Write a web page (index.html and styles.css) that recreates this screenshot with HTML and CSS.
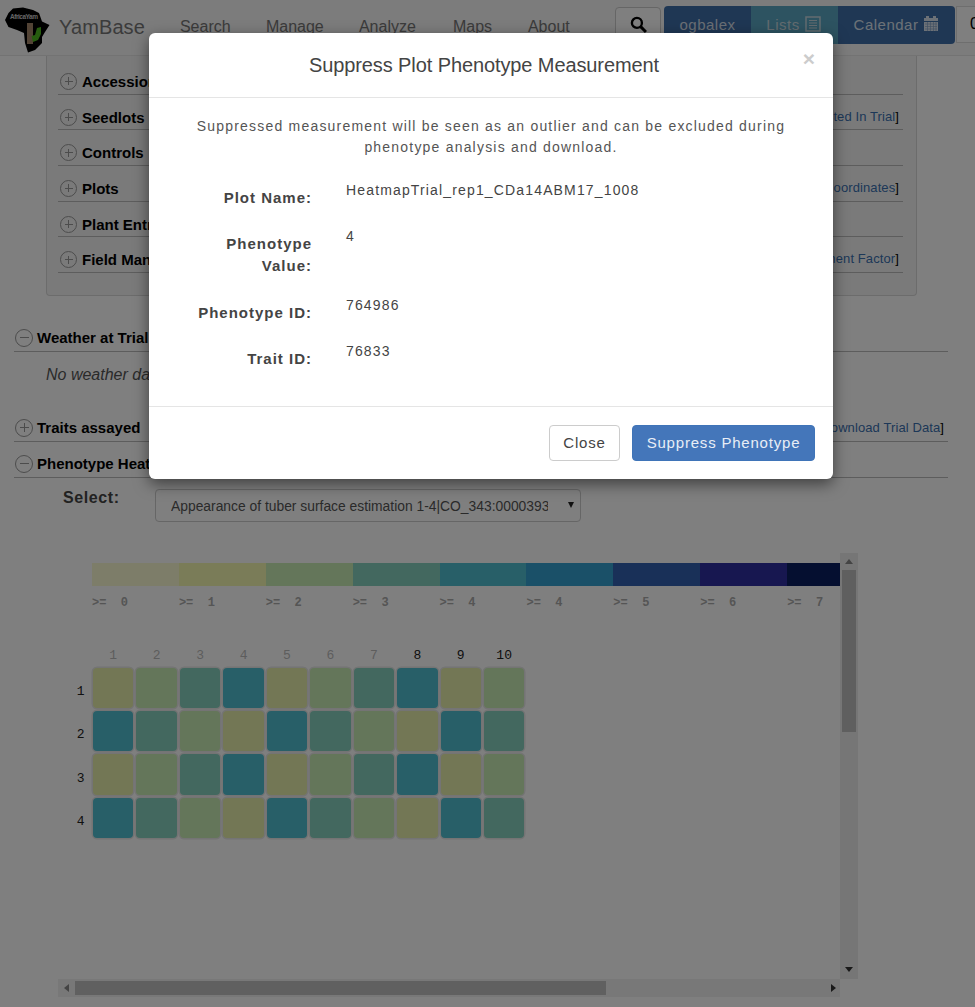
FILE: index.html
```
<!DOCTYPE html>
<html>

<head>
    <meta name="viewport" content="width=device-width, initial-scale=1">
    <title>YamBase</title>
    <link rel="stylesheet" href="styles.css">
</head>

<body>
    <div class="page">
        <!-- Top navigation -->
        <nav class="navbar">
            <svg class="logo" viewBox="0 0 46 46" width="46" height="46">
                <path d="M8 1.5 L18 0.5 L28 3 L34 6 L37 14.5 L44.5 18 L40 25 L37 30 L37 36 L30 43 L23 45.5 L20 36 L19 26 L12 23 L3.5 20 L0 13 L3.5 6 Z" fill="#000"/>
                <rect x="22" y="16" width="6" height="21" fill="#a5866a"/>
                <path d="M28 35 L26.5 29 L30 28 L32 21 L36 20 L36 27 L33 33 Z" fill="#4fb81f"/>
                <text x="5" y="12" class="logoText" textLength="28">AfricaYam</text>
            </svg>
            <span class="brand">YamBase</span>
            <ul class="navLinks">
                <li class="navSearch">Search</li>
                <li class="navManage">Manage</li>
                <li class="navAnalyze">Analyze</li>
                <li class="navMaps">Maps</li>
                <li class="navAbout">About</li>
            </ul>
            <div class="navRight">
                <button class="searchBtn">
                    <svg viewBox="0 0 16 16" width="17" height="17"><circle cx="6.5" cy="6.5" r="4.7" fill="none" stroke="#000" stroke-width="2.2"/><path d="M10 10 L15 15" stroke="#000" stroke-width="2.8"/></svg>
                </button>
                <div class="userBtns">
                    <span class="userBtn userName">ogbalex</span>
                    <span class="userBtn userLists">Lists
                        <svg viewBox="0 0 16 16" width="16" height="16"><rect x="1" y="1" width="14" height="14" fill="none" stroke="#c6d8e0" stroke-width="1.5"/><path d="M4 4.5H12M4 7H12M4 9.5H12M4 12H12" stroke="#c6d8e0"/></svg>
                    </span>
                    <span class="userBtn userCalendar">Calendar
                        <svg viewBox="0 0 16 16" width="16" height="16"><rect x="1" y="2" width="14" height="13" fill="#d8e2ee"/><rect x="3" y="0" width="3" height="4" fill="#d8e2ee"/><rect x="10" y="0" width="3" height="4" fill="#d8e2ee"/><path d="M1 5.5H15" stroke="#3a6ea8"/><path d="M2 8H14M2 10.5H14M2 13H14M4.5 6V15M7.5 6V15M10.5 6V15M13 6V15" stroke="#7a9cc4" stroke-width=".6"/></svg>
                    </span>
                </div>
                <span class="cartBtn">0</span>
            </div>
        </nav>

        <!-- Trial design panel -->
        <div class="well">
            <div class="wellRow"><span class="circleIcon plus"></span><b>Accessions</b></div>
            <div class="wellRow"><span class="circleIcon plus"></span><b>Seedlots</b><span class="rowLink">[<a>Seedlots Listed In Trial</a>]</span></div>
            <div class="wellRow"><span class="circleIcon plus"></span><b>Controls</b></div>
            <div class="wellRow"><span class="circleIcon plus"></span><b>Plots</b><span class="rowLink">[<a>Upload Plot Coordinates</a>]</span></div>
            <div class="wellRow"><span class="circleIcon plus"></span><b>Plant Entries</b></div>
            <div class="wellRow"><span class="circleIcon plus"></span><b>Field Management Factors</b><span class="rowLink">[<a>Add Management Factor</a>]</span></div>
        </div>

        <div class="section sectionWeather"><span class="circleIcon minus"></span><b>Weather at Trial Location</b></div>
        <p class="noWeather">No weather data available for this trial</p>

        <div class="section sectionTraits"><span class="circleIcon plus"></span><b>Traits assayed</b><span class="rowLink">[<a>Download Trial Data</a>]</span></div>
        <div class="section sectionHeat"><span class="circleIcon minus"></span><b>Phenotype Heatmap</b></div>

        <div class="selectRow">
            <label class="selectLabel">Select:</label>
            <div class="selectBox">
                <select>
                    <option>Appearance of tuber surface estimation 1-4|CO_343:0000393</option>
                </select>
            </div>
        </div>

        <!-- Heatmap with its scrollbars -->
        <div class="scroller">
            <div class="scrollView">
                <div class="heatArea">
                    <div class="legend">
                        <div class="legendItem"><span class="swatch l0"></span><span class="legendText">&gt;=  0</span></div>
                        <div class="legendItem"><span class="swatch l1"></span><span class="legendText">&gt;=  1</span></div>
                        <div class="legendItem"><span class="swatch l2"></span><span class="legendText">&gt;=  2</span></div>
                        <div class="legendItem"><span class="swatch l3"></span><span class="legendText">&gt;=  3</span></div>
                        <div class="legendItem"><span class="swatch l4"></span><span class="legendText">&gt;=  4</span></div>
                        <div class="legendItem"><span class="swatch l5"></span><span class="legendText">&gt;=  4</span></div>
                        <div class="legendItem"><span class="swatch l6"></span><span class="legendText">&gt;=  5</span></div>
                        <div class="legendItem"><span class="swatch l7"></span><span class="legendText">&gt;=  6</span></div>
                        <div class="legendItem"><span class="swatch l8"></span><span class="legendText">&gt;=  7</span></div>
                    </div>
                    <div class="heatGrid">
                        <span class="corner"></span>
                        <span class="colHead">1</span><span class="colHead">2</span><span class="colHead">3</span><span class="colHead">4</span><span class="colHead">5</span><span class="colHead">6</span><span class="colHead">7</span><span class="colHead dark">8</span><span class="colHead dark">9</span><span class="colHead dark">10</span>

                        <span class="rowHead">1</span>
                        <span class="cell l1"></span><span class="cell l2"></span><span class="cell l3"></span><span class="cell l4"></span><span class="cell l1"></span><span class="cell l2"></span><span class="cell l3"></span><span class="cell l4"></span><span class="cell l1"></span><span class="cell l2"></span>
                        <span class="rowHead">2</span>
                        <span class="cell l4"></span><span class="cell l3"></span><span class="cell l2"></span><span class="cell l1"></span><span class="cell l4"></span><span class="cell l3"></span><span class="cell l2"></span><span class="cell l1"></span><span class="cell l4"></span><span class="cell l3"></span>
                        <span class="rowHead">3</span>
                        <span class="cell l1"></span><span class="cell l2"></span><span class="cell l3"></span><span class="cell l4"></span><span class="cell l1"></span><span class="cell l2"></span><span class="cell l3"></span><span class="cell l4"></span><span class="cell l1"></span><span class="cell l2"></span>
                        <span class="rowHead">4</span>
                        <span class="cell l4"></span><span class="cell l3"></span><span class="cell l2"></span><span class="cell l1"></span><span class="cell l4"></span><span class="cell l3"></span><span class="cell l2"></span><span class="cell l1"></span><span class="cell l4"></span><span class="cell l3"></span>
                    </div>
                </div>
                <div class="vBar">
                    <span class="arrowUp"></span>
                    <div class="vTrack"><div class="vThumb"></div></div>
                    <span class="arrowDown"></span>
                </div>
            </div>
            <div class="hBar">
                <span class="arrowLeft"></span>
                <div class="hTrack"><div class="hThumb"></div></div>
                <span class="arrowRight"></span>
            </div>
        </div>
    </div>

    <div class="backdrop"></div>

    <!-- Suppress dialog -->
    <div class="modal">
        <div class="modalHeader">
            <h4>Suppress Plot Phenotype Measurement</h4>
            <span class="modalClose">&times;</span>
        </div>
        <div class="modalBody">
            <p class="modalIntro">Suppressed measurement will be seen as an outlier and can be excluded during phenotype analysis and download.</p>
            <div class="formRow rowName"><label>Plot Name:</label><span>HeatmapTrial_rep1_CDa14ABM17_1008</span></div>
            <div class="formRow rowValue"><label>Phenotype Value:</label><span>4</span></div>
            <div class="formRow rowPheno"><label>Phenotype ID:</label><span>764986</span></div>
            <div class="formRow rowTrait"><label>Trait ID:</label><span>76833</span></div>
        </div>
        <div class="modalFooter">
            <button class="btnClose">Close</button>
            <button class="btnSuppress">Suppress Phenotype</button>
        </div>
    </div>
</body>

</html>
```

FILE: styles.css
```
* {
    box-sizing: border-box;
}

html,
body {
    margin: 0;
    height: 1007px;
    overflow: hidden;
    background: #fff;
    font-family: "Liberation Sans", Arial, sans-serif;
    color: #333;
}

.page {
    width: 975px;
    height: 1007px;
    overflow: hidden;
}

/* Navigation */

.navbar {
    display: flex;
    align-items: flex-start;
    height: 56px;
    border-bottom: 1px solid #e7e7e7;
    background: #f8f8f8;
}

.logo {
    margin: 7px 0 0 5px;
    flex: none;
}

.logoText {
    font-size: 6.5px;
    font-weight: bold;
    fill: #ccc;
}

.brand {
    margin: 15px 0 0 8px;
    font-size: 20px;
    line-height: 24px;
    color: #777;
    letter-spacing: 0.1px;
}

.navLinks {
    display: flex;
    margin: 17px 0 0 35px;
    padding: 0;
    list-style: none;
    font-size: 16px;
    line-height: 20px;
    color: #777;
}

.navSearch { width: 86px; }
.navManage { width: 93px; }
.navAnalyze { width: 94px; }
.navMaps { width: 75px; }
.navAbout { width: 87px; }

.navRight {
    display: flex;
    align-items: flex-start;
    flex: none;
    width: 360px;
    margin-top: 6px;
    margin-left: auto;
}

.searchBtn {
    flex: none;
    width: 46px;
    height: 38px;
    margin-top: 1px;
    border: 1px solid #ccc;
    border-radius: 4px;
    background: #fff;
}

.userBtns {
    display: flex;
    flex: none;
    margin-left: 3px;
    border-radius: 4px;
    overflow: hidden;
}

.userBtn {
    display: flex;
    align-items: center;
    justify-content: center;
    flex: none;
    gap: 5px;
    height: 38px;
    padding-bottom: 2px;
    font-size: 15px;
    letter-spacing: 0.5px;
    color: #fff;
}

.userName { width: 87px; background: #3f6fa8; color: #d4deea; }
.userLists { width: 87px; padding-right: 2px; background: #5ba6c2; color: #c6d8e0; }
.userCalendar { width: 117px; background: #3f6fa8; color: #d8e2ee; }

.cartBtn {
    display: block;
    flex: none;
    width: 23px;
    height: 37px;
    margin-left: 1px;
    padding: 8px 0 0 13px;
    border: 1px solid #ddd;
    background: #fff;
    color: #000;
    font-size: 16px;
}

/* Panels and sections */

.well {
    width: 871px;
    height: 240px;
    margin-left: 46px;
    padding: 3px 13px 0 11px;
    border: 1px solid #d8d8d8;
    border-top: 0;
    border-radius: 0 0 4px 4px;
    background: #f5f5f5;
}

.wellRow {
    display: flex;
    align-items: center;
    height: 35.7px;
    border-bottom: 1px solid #bbb;
    padding-top: 13px;
    padding-bottom: 3px;
    font-size: 15px;
    color: #000;
}

.wellRow .rowLink {
    margin-top: -2px;
}

.circleIcon {
    position: relative;
    flex: none;
    width: 17px;
    height: 17px;
    margin-left: 2px;
    margin-right: 5px;
    border: 1.5px solid #999;
    border-radius: 50%;
}

.section .circleIcon {
    width: 18px;
    height: 18px;
    margin-left: 1px;
    margin-right: 4px;
}

/* plus and minus inside the circle */

.circleIcon::before {
    content: "";
    position: absolute;
    left: 3.5px;
    right: 3.5px;
    top: 50%;
    height: 1px;
    margin-top: -0.5px;
    background: #999;
}

.plus::after {
    content: "";
    position: absolute;
    top: 3.5px;
    bottom: 3.5px;
    left: 50%;
    width: 1px;
    margin-left: -0.5px;
    background: #999;
}

.rowLink {
    margin-left: auto;
    padding-right: 4px;
    font-size: 13px;
    font-weight: normal;
    letter-spacing: 0.1px;
    color: #000;
}

.rowLink a {
    color: #3a70b0;
}

.section {
    display: flex;
    align-items: center;
    width: 934px;
    margin-left: 14px;
    height: 28px;
    border-bottom: 1px solid #bbb;
    font-size: 15px;
    color: #000;
}

.sectionWeather { margin-top: 28px; }
.sectionTraits { margin-top: 0; }
.sectionHeat { margin-top: 8px; }

.noWeather {
    height: 62px;
    margin: 0;
    padding: 13px 0 0 46px;
    font-size: 16px;
    font-style: italic;
    line-height: 20px;
    color: #555;
}

.selectRow {
    display: flex;
    align-items: flex-start;
    margin: 11px 0 0 63px;
}

.selectLabel {
    width: 92px;
    font-size: 16px;
    font-weight: bold;
    line-height: 18px;
    letter-spacing: 0.6px;
    color: #444;
}

.selectBox {
    position: relative;
    width: 426px;
    height: 33px;
}

.selectBox::after {
    content: "";
    position: absolute;
    right: 7px;
    top: 13px;
    border-style: solid;
    border-width: 6px 3.5px 0;
    border-color: #222 transparent transparent;
}

.selectBox select {
    width: 100%;
    height: 33px;
    padding: 0 32px 0 15px;
    border: 1px solid #ccc;
    border-radius: 4px;
    background: #fff;
    font-family: "Liberation Sans", Arial, sans-serif;
    font-size: 13.85px;
    color: #555;
    appearance: none;
    -webkit-appearance: none;
}

/* Heatmap box */

.scroller {
    width: 800px;
    height: 444px;
    margin: 31px 0 0 58px;
}

.scrollView {
    display: flex;
    height: 426px;
}

.heatArea {
    width: 782px;
    height: 426px;
    overflow: hidden;
    padding: 10px 0 0 12px;
}

.legend {
    display: flex;
    width: 800px;
    margin-left: 22px;
}

.legendItem {
    flex: none;
    width: 86.9px;
}

.swatch {
    display: block;
    height: 23px;
}

.legendText {
    display: block;
    margin-top: 11px;
    font-family: "Liberation Mono", monospace;
    font-size: 12px;
    font-weight: bold;
    line-height: 12px;
    white-space: pre;
    color: #aaa;
}

.l0 { background: #fafad2; }
.l1 { background: #e6eeaa; }
.l2 { background: #c9ecb4; }
.l3 { background: #86d0bf; }
.l4 { background: #50bed0; }
.l5 { background: #34a0d0; }
.l6 { background: #3260b0; }
.l7 { background: #2f2fa0; }
.l8 { background: #0a1e60; }

.swatch.l1 { background: #f4f8b0; }

.heatGrid {
    display: grid;
    grid-template-columns: 21.5px repeat(10, 43.45px);
    grid-template-rows: 20px repeat(4, 43.45px);
    width: 456px;
    margin-top: 37px;
}

.colHead {
    font-family: "Liberation Mono", monospace;
    font-size: 13px;
    line-height: 20px;
    text-align: center;
    color: #bbb;
}

.colHead.dark {
    color: #222;
}

.cell {
    margin: 1.5px;
    border-radius: 4px;
    box-shadow: 0 0 0 1.5px #e8e8e8;
}

.rowHead {
    padding-top: 4px;
    font-family: "Liberation Mono", monospace;
    font-size: 13px;
    line-height: 43px;
    text-align: center;
    color: #222;
}

/* Scrollbars drawn by hand */

.vBar {
    display: flex;
    flex-direction: column;
    align-items: center;
    width: 18px;
    height: 426px;
    background: #ededed;
}

.vTrack {
    flex: 1;
    width: 100%;
    padding: 0 2px;
}

.vThumb {
    height: 162px;
    background: #bfbfbf;
}

.hBar {
    display: flex;
    align-items: center;
    width: 782px;
    height: 18px;
    background: #f0f0f0;
}

.hTrack {
    flex: 1;
    height: 100%;
    padding: 2px 0;
}

.hThumb {
    width: 531px;
    height: 100%;
    background: #c0c0c0;
}

.arrowUp {
    margin: 6px 0 6px;
    border-style: solid;
    border-width: 0 4.5px 5px;
    border-color: transparent transparent #888;
}

.arrowDown {
    margin: 6px 0 7px;
    border-style: solid;
    border-width: 5px 4.5px 0;
    border-color: #333 transparent transparent;
}

.arrowLeft {
    margin: 0 6px 0 6px;
    border-style: solid;
    border-width: 4.5px 5px 4.5px 0;
    border-color: transparent #888 transparent transparent;
}

.arrowRight {
    margin: 0 4px 0 6px;
    border-style: solid;
    border-width: 4.5px 0 4.5px 5px;
    border-color: transparent transparent transparent #333;
}

/* Dialog */

.backdrop {
    position: absolute;
    left: 0;
    top: 0;
    width: 975px;
    height: 1007px;
    background: rgba(0, 0, 0, 0.5);
}

.modal {
    position: absolute;
    left: 149px;
    top: 33px;
    width: 684px;
    height: 446px;
    border-radius: 6px;
    background: #fff;
    box-shadow: 0 5px 15px rgba(0, 0, 0, 0.5);
    letter-spacing: 1.15px;
}

.modalHeader {
    position: relative;
    height: 65px;
    padding-right: 14px;
    border-bottom: 1px solid #e5e5e5;
    text-align: center;
}

.modalHeader h4 {
    margin: 0;
    padding-top: 20px;
    font-size: 20px;
    font-weight: normal;
    line-height: 24px;
    letter-spacing: -0.1px;
    color: #444;
}

.modalClose {
    position: absolute;
    right: 18px;
    top: 12px;
    font-size: 21px;
    font-weight: bold;
    line-height: 27px;
    letter-spacing: 0;
    color: #ccc;
}

.modalBody {
    height: 309px;
    padding: 18px 15px 0;
    border-bottom: 1px solid #e5e5e5;
    font-size: 14px;
}

.modalIntro {
    margin: 0 25px;
    line-height: 21px;
    letter-spacing: 1.2px;
    text-align: center;
    color: #555;
}

.formRow {
    display: flex;
    line-height: 22px;
}

.formRow label {
    flex: none;
    width: 148px;
    padding-left: 20px;
    font-size: 15px;
    font-weight: bold;
    letter-spacing: 1px;
    text-align: right;
    color: #444;
}

.formRow span {
    margin-left: 34px;
    margin-top: -8px;
    color: #444;
}

.rowName { margin-top: 29px; }
.rowValue { margin-top: 24px; }
.rowPheno { margin-top: 25px; }
.rowTrait { margin-top: 24px; }

.modalFooter {
    display: flex;
    justify-content: flex-end;
    gap: 12px;
    padding: 18px 18px 0 0;
}

.modalFooter button {
    height: 36px;
    padding-bottom: 3px;
    border-radius: 4px;
    font-family: "Liberation Sans", Arial, sans-serif;
    font-size: 15px;
    letter-spacing: 0.8px;
}

.btnClose {
    width: 71px;
    border: 1px solid #ccc;
    background: #fff;
    color: #444;
}

.btnSuppress {
    width: 183px;
    border: 1px solid #3f74b8;
    background: #4476ba;
    color: #e8eef6;
}
```
